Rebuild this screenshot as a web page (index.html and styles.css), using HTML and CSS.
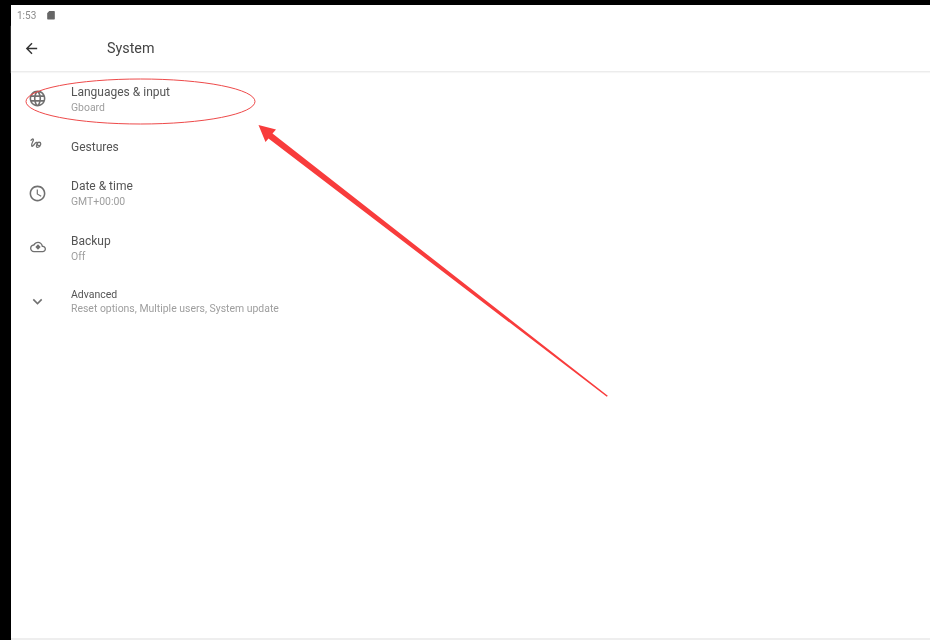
FILE: index.html
```html
<!DOCTYPE html>
<html lang="en">
<head>
<meta charset="utf-8">
<title>System</title>
<link rel="stylesheet" href="styles.css">
</head>
<body>
<div class="screen">
  <div class="status">
    <span class="clock">1:53</span>
    <svg class="sd" viewBox="0 0 9 10"><path d="M2.5 0.500H8a.8.8 0 0 1 .8.8v7.900a.8.8 0 0 1-.8.8H1a.8.8 0 0 1-.8-.8V3z"/></svg>
  </div>
  <header class="appbar">
    <svg class="back" viewBox="0 0 24 24"><path d="M20 11H7.830l5.590-5.590L12 4l-8 8 8 8 1.410-1.410L7.830 13H20v-2z"/></svg>
    <h1 class="title">System</h1>
  </header>
  <main class="list">
    <div class="row row-two">
      <svg class="icon icon-globe" viewBox="0 0 24 24"><path d="M11.99 2C6.47 2 2 6.48 2 12s4.47 10 9.99 10C17.52 22 22 17.52 22 12S17.52 2 11.99 2zm6.93 6h-2.95c-.32-1.25-.78-2.45-1.38-3.56 1.84.63 3.37 1.91 4.33 3.56zM12 4.04c.83 1.2 1.48 2.53 1.91 3.96h-3.82c.43-1.43 1.08-2.76 1.91-3.96zM4.26 14C4.1 13.36 4 12.69 4 12s.1-1.36.26-2h3.38c-.08.66-.14 1.32-.14 2 0 .68.06 1.34.14 2H4.26zm.82 2h2.95c.32 1.25.78 2.45 1.38 3.56-1.84-.63-3.37-1.9-4.33-3.56zm2.95-8H5.08c.96-1.66 2.49-2.93 4.33-3.56C8.81 5.55 8.35 6.75 8.03 8zM12 19.96c-.83-1.2-1.48-2.53-1.91-3.96h3.82c-.43 1.43-1.08 2.76-1.91 3.96zM14.34 14H9.66c-.09-.66-.16-1.32-.16-2 0-.68.07-1.35.16-2h4.68c.09.65.16 1.32.16 2 0 .68-.07 1.34-.16 2zm.25 5.56c.6-1.11 1.06-2.31 1.38-3.56h2.95c-.96 1.65-2.49 2.93-4.33 3.56zM16.36 14c.08-.66.14-1.32.14-2 0-.68-.06-1.34-.14-2h3.38c.16.64.26 1.31.26 2s-.1 1.36-.26 2h-3.38z"/></svg>
      <div class="text"><div class="primary">Languages &amp; input</div><div class="secondary">Gboard</div></div>
    </div>
    <div class="row row-one">
      <svg class="icon-gesture" viewBox="0 0 12 12"><path class="line" d="M1.500 3.200C2.200 1.700 3.700 1.200 3.800 2.300 3.900 3.500 1.800 5.500 2.300 7.600c.3 1.100 1.700-.6 2.700-2 .9-1.200 1.800-1.400 2-.6.2 1-.9 2-.6 3.200.3 1 2.400.7 3.100-.5"/><circle class="line" cx="8.600" cy="6" r="1.500"/></svg>
      <div class="text"><div class="primary">Gestures</div></div>
    </div>
    <div class="row row-two row-date">
      <svg class="icon" viewBox="0 0 24 24"><path d="M11.99 2C6.47 2 2 6.48 2 12s4.470 10 9.990 10C17.520 22 22 17.520 22 12S17.520 2 11.990 2zM12 20c-4.420 0-8-3.580-8-8s3.580-8 8-8 8 3.580 8 8-3.580 8-8 8zm.5-13H11v6l5.250 3.150.75-1.230-4.500-2.670z"/></svg>
      <div class="text"><div class="primary">Date &amp; time</div><div class="secondary">GMT+00:00</div></div>
    </div>
    <div class="row row-two row-backup">
      <svg class="icon icon-cloud" viewBox="0 0 24 24"><path d="M19.350 10.040C18.670 6.590 15.640 4 12 4 9.110 4 6.600 5.640 5.350 8.040 2.340 8.360 0 10.910 0 14c0 3.310 2.690 6 6 6h13c2.760 0 5-2.240 5-5 0-2.640-2.050-4.780-4.650-4.960zM19 18H6c-2.210 0-4-1.790-4-4 0-2.050 1.530-3.760 3.560-3.970l1.070-.11.5-.95C8.080 7.140 9.940 6 12 6c2.620 0 4.880 1.860 5.390 4.430l.3 1.500 1.530.11c1.560.1 2.780 1.410 2.780 2.960 0 1.650-1.350 3-3 3zM8 12l4-4 4 4-4 4z"/></svg>
      <div class="text"><div class="primary">Backup</div><div class="secondary">Off</div></div>
    </div>
    <div class="row row-two row-advanced">
      <svg class="icon icon-chevron" viewBox="0 0 24 24"><path d="M16.590 8.590L12 13.170 7.410 8.590 6 10l6 6 6-6z"/></svg>
      <div class="text text-tight"><div class="primary primary-small">Advanced</div><div class="secondary secondary-tight">Reset options, Multiple users, System update</div></div>
    </div>
  </main>
  <div class="navline"></div>
</div>
<svg class="markup" viewBox="0 0 930 640">
  <ellipse class="ring" cx="140.500" cy="101.500" rx="114.500" ry="22.500"/>
  <polygon class="arrow" points="258.500,125 276,129.500 272.500,133.500 607.800,395.800 606.800,396.800 268.500,138.500 265.500,142"/>
</svg>
</body>
</html>
```

FILE: styles.css
```css
html, body {
  margin: 0;
  height: 100%;
  background: #000;
  overflow: hidden;
}
body {
  padding: 5px 0 0 11px;
  box-sizing: border-box;
  font-family: Roboto, "Liberation Sans", sans-serif;
}
.screen {
  height: 635px;
  background: #fff;
  display: flex;
  flex-direction: column;
  filter: blur(0.3px);
}
.status {
  height: 20px;
  display: flex;
  align-items: center;
  padding-left: 6px;
  gap: 11px;
  color: #8a8a8a;
  font-size: 10px;
}
.sd {
  width: 8px;
  height: 10px;
  fill: #666;
}
.appbar {
  height: 46px;
  display: flex;
  align-items: center;
  padding-left: 12px;
  border-bottom: 1px solid #ececec;
  box-shadow: 0 1px 1px #f6f6f6;
}
.back {
  width: 17px;
  height: 17px;
  fill: #333;
}
.title {
  margin: 0 0 0 67px;
  font-size: 14.300px;
  font-weight: 400;
  color: #444;
}
.list {
  flex: 1;
}
.row {
  display: flex;
  align-items: center;
  padding-left: 17px;
}
.row-two { height: 54px; }
.row-one { height: 40px; }
.row-date { margin-bottom: 1px; }
.icon {
  width: 19px;
  height: 19px;
  margin-right: 1px;
  fill: #707070;
  flex: none;
}
.icon-globe { margin-top: -2px; }
.icon-cloud {
  width: 16px;
  height: 16px;
  margin: -2px 2px 0 2px;
}
.icon-chevron {
  margin-top: -1px;
}
.icon-gesture {
  width: 14px;
  height: 14px;
  margin: -4px 5px 0 1px;
  flex: none;
}
.line {
  fill: none;
  stroke: #707070;
  stroke-width: 1.100;
}
.text {
  margin-left: 23px;
  padding-top: 2px;
}
.text-tight {
  padding-top: 0;
}
.primary {
  font-size: 12px;
  line-height: 15px;
  color: #555;
}
.primary-small {
  font-size: 10.500px;
  line-height: 14px;
}
.secondary {
  font-size: 10.450px;
  line-height: 15px;
  color: #9e9e9e;
}
.secondary-tight {
  line-height: 14px;
}
.navline {
  height: 2px;
  background: #eee;
}
.markup {
  position: absolute;
  top: 0;
  left: 0;
  width: 930px;
  height: 640px;
  pointer-events: none;
}
.ring {
  fill: none;
  stroke: #ee4a4a;
  stroke-width: 1;
}
.arrow {
  fill: #f83c3c;
}
```
